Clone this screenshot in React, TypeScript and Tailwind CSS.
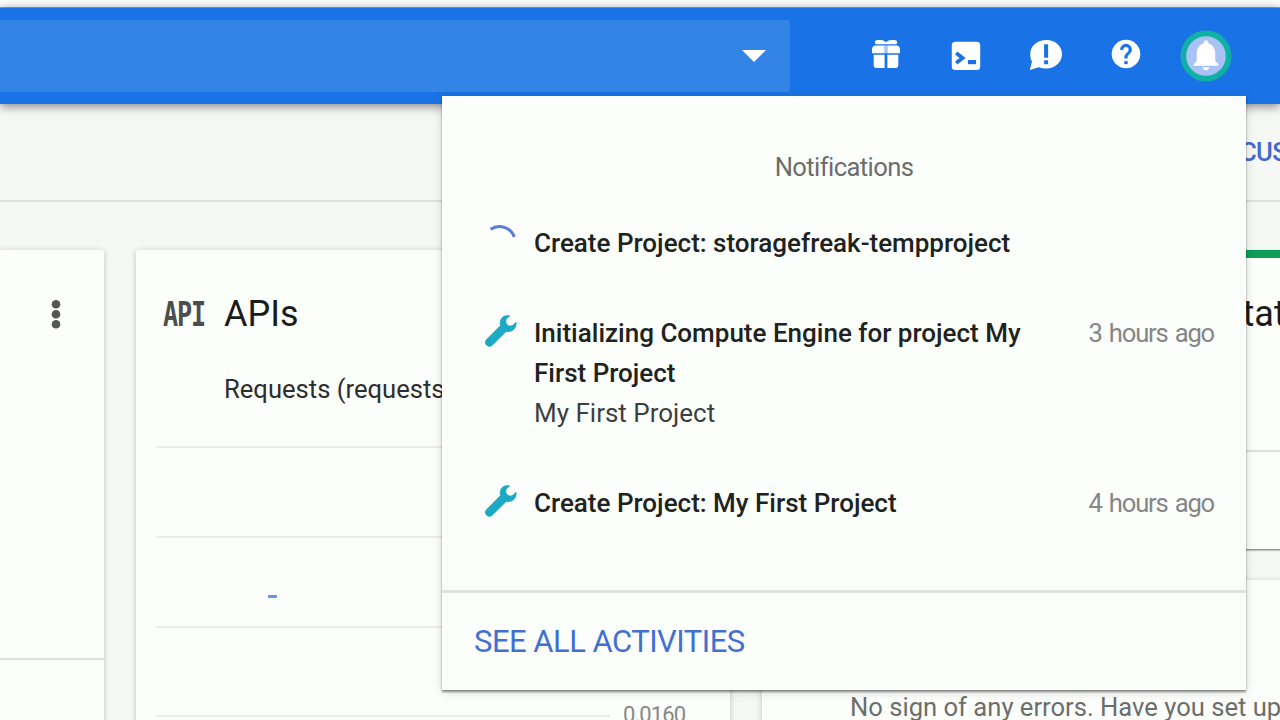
import type { ReactNode } from "react";

function GiftIcon() {
  return (
    <svg width="32" height="32" viewBox="0 0 32 32" fill="#fff">
      <path d="M4.800 4 Q5 2.100 7.500 2 H11.500 Q14 2.400 16 4.200 Q18 2.400 20.500 2 H24.500 Q27 2.100 27.200 4 L26.500 6.300 H5.500 Z" />
      <path d="M5.500 7.400 H14.600 V15.200 H2 V11 Q2.400 7.800 5.500 7.400 Z M17.400 7.400 H26.500 Q29.600 7.800 30 11 V15.200 H17.400 Z" />
      <path d="M14.600 7.400 h2.800 v7.800 h-2.800 z" opacity="0.6" />
      <path d="M3.700 16.700 H14.600 V30 H6 Q3.700 30 3.700 27.600 Z M17.400 16.700 H28.300 V27.600 Q28.300 30 26 30 H17.400 Z" />
    </svg>
  );
}

function ShellIcon() {
  return (
    <svg width="32" height="32" viewBox="0 0 32 32">
      <rect x="1.800" y="3.700" width="28.400" height="28.300" rx="3.500" fill="#fff" />
      <path d="M6.200 15 L12.600 20 L6.200 25" fill="none" stroke="#1a73e6" strokeWidth="3.700" />
      <path d="M17.900 22 h8.200 v4.200 h-8.200 z" fill="#1a73e6" />
    </svg>
  );
}

function FeedbackIcon() {
  return (
    <svg width="36" height="32" viewBox="0 0 36 32">
      <path d="M18.400 2 C27 2 34 8 34 16 C34 24 27 30.600 18.400 30.600 C15.500 30.600 13 30 10.800 29.200 L1.800 32 L4 23.600 C2.700 21.400 2.200 18.800 2.200 16 C2.200 8 9.500 2 18.400 2 Z" fill="#fff" />
      <path d="M16.100 6.200 h4 v13.600 h-4 z M16.100 22.200 h4 v4 h-4 z" fill="#1a73e6" />
    </svg>
  );
}

function HelpIcon() {
  return (
    <svg width="32" height="32" viewBox="0.800 0.800 22.400 22.400">
      <circle cx="12" cy="12" r="10" fill="#fff" />
      <path
        d="M11 17h2v2h-2zM15.070 11.250l-.9.920C13.450 12.900 13 13.500 13 15h-2v-.5c0-1.100.450-2.100 1.170-2.830l1.240-1.260c.370-.360.590-.860.590-1.410 0-1.100-.9-2-2-2s-2 .9-2 2H8c0-2.210 1.790-4 4-4s4 1.790 4 4c0 .880-.360 1.680-.930 2.250z"
        fill="#1a73e6"
        stroke="#1a73e6"
        strokeWidth="0.300"
      />
    </svg>
  );
}

function BellIcon() {
  return (
    <svg width="52" height="52" viewBox="0 0 52 52">
      <circle cx="26" cy="26" r="22.600" fill="#a9c2f6" stroke="#10b1a4" strokeWidth="5.600" />
      <path
        transform="translate(7.400 6.300) scale(1.550)"
        fill="#fff"
        d="M12 22c1.100 0 2-.9 2-2h-4c0 1.100.890 2 2 2zm6-6v-5c0-3.070-1.640-5.640-4.500-6.320V4c0-.830-.670-1.500-1.500-1.500s-1.500.670-1.500 1.500v.680C7.630 5.360 6 7.920 6 11v5l-2 2v1h16v-1l-2-2z"
      />
    </svg>
  );
}

function WrenchIcon() {
  return (
    <svg width="32" height="32" viewBox="0 0 32 32" fill="#1ba9c4" stroke="#1ba9c4" strokeWidth="0.600" strokeLinejoin="round">
      <path d="M23.800 .5 C17.800 -.4 13.900 4.600 15.400 10.600 L1.600 24.400 A3.900 3.900 0 0 0 7.300 30.200 L21.200 16.500 C27.200 17.800 32.200 13.200 31 7 L28.600 9.600 C26.500 11.600 23.600 11.200 22 9.400 C20.400 7.600 20.400 5 22 3.200 L24.800 1 Z" />
    </svg>
  );
}

function SpinnerIcon() {
  return (
    <svg width="32" height="32" viewBox="0 0 32 32" className="overflow-visible">
      <path d="M5.600 4.200 A15.800 15.800 0 0 1 29.300 12" fill="none" stroke="#5b7bd5" strokeWidth="3" />
    </svg>
  );
}

function Activity({ icon, title, project, time }: { icon: ReactNode; title: string; project?: string; time?: string }) {
  return (
    <li className="flex items-start pr-8 pl-[43px]">
      <span className="mt-[2px] w-[49px] shrink-0">{icon}</span>
      <div className="w-[500px]">
        <p className="font-medium text-[#202221]">{title}</p>
        {project && <p className="text-[#3d3f3e]">{project}</p>}
      </div>
      {time && <time className="ml-auto text-[25.600px] tracking-[-1.200px] [word-spacing:2px] whitespace-nowrap text-[#858786]">{time}</time>}
    </li>
  );
}

function NotificationPanel() {
  return (
    <section className="absolute top-24 left-[442px] z-20 flex h-[594px] w-[804px] flex-col bg-[#fcfefb] text-[26px] leading-10 shadow-[0_2px_2px_rgba(0,0,0,0.42),0_2px_10px_rgba(0,0,0,0.14)]">
      <h2 className="pt-[51px] text-center text-[25.600px] tracking-[-0.600px] text-[#6b6d6c]">Notifications</h2>
      <ul className="mt-9 flex flex-1 flex-col gap-[50px]">
        <Activity icon={<SpinnerIcon />} title="Create Project: storagefreak-tempproject" />
        <Activity
          icon={<WrenchIcon />}
          title="Initializing Compute Engine for project My First Project"
          project="My First Project"
          time="3 hours ago"
        />
        <Activity icon={<WrenchIcon />} title="Create Project: My First Project" time="4 hours ago" />
      </ul>
      <footer className="flex h-[100px] items-center border-t-[3px] border-[#dfe1df] pl-8">
        <a className="text-[31px] tracking-[-0.520px] text-[#4270d2]">SEE ALL ACTIVITIES</a>
      </footer>
    </section>
  );
}

function Header() {
  return (
    <header className="relative z-10 h-24 shrink-0 bg-[#1a73e6] shadow-[0_2px_10px_rgba(0,0,0,0.5)]">
      <div className="flex h-full items-center">
        <div className="flex h-[72px] w-[790px] items-center justify-end rounded-r-[3px] bg-[#3484e7] pr-6">
          <svg width="24" height="12" viewBox="0 0 24 12">
            <path d="M0 0 H24 L12 12 Z" fill="#fff" />
          </svg>
        </div>
        <nav className="mb-1 ml-20 flex items-center">
          <span className="w-20"><GiftIcon /></span>
          <span className="w-[78px]"><ShellIcon /></span>
          <span className="w-[82px]"><FeedbackIcon /></span>
          <span className="w-[70px]"><HelpIcon /></span>
          <span className="mt-1"><BellIcon /></span>
        </nav>
      </div>
    </header>
  );
}

const cardClass = "bg-[#fcfefb] shadow-[0_1px_6px_rgba(0,0,0,0.22)]";

export default function App() {
  return (
    <div className="relative flex h-[720px] w-[1280px] flex-col overflow-hidden bg-[#f6f8f6] font-['Roboto',sans-serif]">
      <div className="h-2 shrink-0 border-b border-[#9c9f9d] bg-[#fcfefb]" />
      <Header />
      <div className="flex h-[98px] shrink-0 items-center border-b-2 border-[#dfe1df] pl-[1240px]">
        <span className="text-[25.600px] font-medium tracking-[-0.600px] whitespace-nowrap text-[#4468cf]">CUSTOMIZE</span>
      </div>
      <main className="flex gap-8 pt-12">
        <section className={`${cardClass} flex h-[560px] w-[104px] shrink-0 flex-col rounded-tr-[3px]`}>
          <div className="flex h-[408px] items-start justify-end pt-[50px] pr-11">
            <svg width="9" height="29" viewBox="0 0 9 29" fill="#555756" className="overflow-visible">
              <circle cx="5" cy="4.300" r="4.300" />
              <circle cx="5" cy="14.300" r="4.300" />
              <circle cx="5" cy="24.300" r="4.300" />
            </svg>
          </div>
          <div className="border-t-2 border-[#dfe1df]" />
        </section>

        <section className={`${cardClass} h-[560px] w-[594px] shrink-0 rounded-[3px]`}>
          <div className="flex h-32 items-center pl-[27px]">
            <span className="w-[61px]">
              <span className="inline-block origin-left scale-x-[0.740] font-['DejaVu_Sans_Mono',monospace] text-[34px] font-bold tracking-[-1.600px] text-[#4c4e4d]">API</span>
            </span>
            <h2 className="text-[36px] leading-none text-[#1a1c1b]">APIs</h2>
          </div>
          <p className="-mt-px pl-[88px] text-[25.600px] leading-6 whitespace-nowrap text-[#2c2e2d]">Requests (requests/sec)</p>
          <div className="mt-[45px] ml-5 flex w-[454px] flex-col">
            <div className="h-[90px] border-t-2 border-[#ebedeb]" />
            <div className="h-[90px] border-t-2 border-[#ebedeb] pt-[57px] pl-28">
              <div className="h-[3px] w-[9px] bg-[#6a95e6]" />
            </div>
            <div className="h-[90px] border-t-2 border-[#ebedeb]" />
            <div className="flex h-0 items-center">
              <div className="w-[454px] shrink-0 border-t-2 border-[#ebedeb]" />
              <span className="mb-[3px] ml-[13px] text-[22px] tracking-[-0.900px] text-[#868887]">0.0160</span>
            </div>
          </div>
        </section>

        <div className="flex w-[594px] shrink-0 flex-col gap-[31px]">
          <section className="h-[299px] border-t-8 border-[#0f9d58] bg-[#fcfefb] shadow-[0_1px_2px_rgba(0,0,0,0.6)]">
            <div className="flex h-[194px] items-start border-b-2 border-[#dfe1df] pt-[38px] pl-[462px]">
              <h2 className="text-[36px] leading-none text-[#1a1c1b]">status</h2>
            </div>
          </section>
          <section className={`${cardClass} h-[300px] rounded-[3px] pt-[107px] pl-[88px]`}>
            <p className="text-[25.600px] leading-10 whitespace-nowrap text-[#6c6e6d]">No sign of any errors. Have you set up</p>
          </section>
        </div>
      </main>
      <NotificationPanel />
    </div>
  );
}
